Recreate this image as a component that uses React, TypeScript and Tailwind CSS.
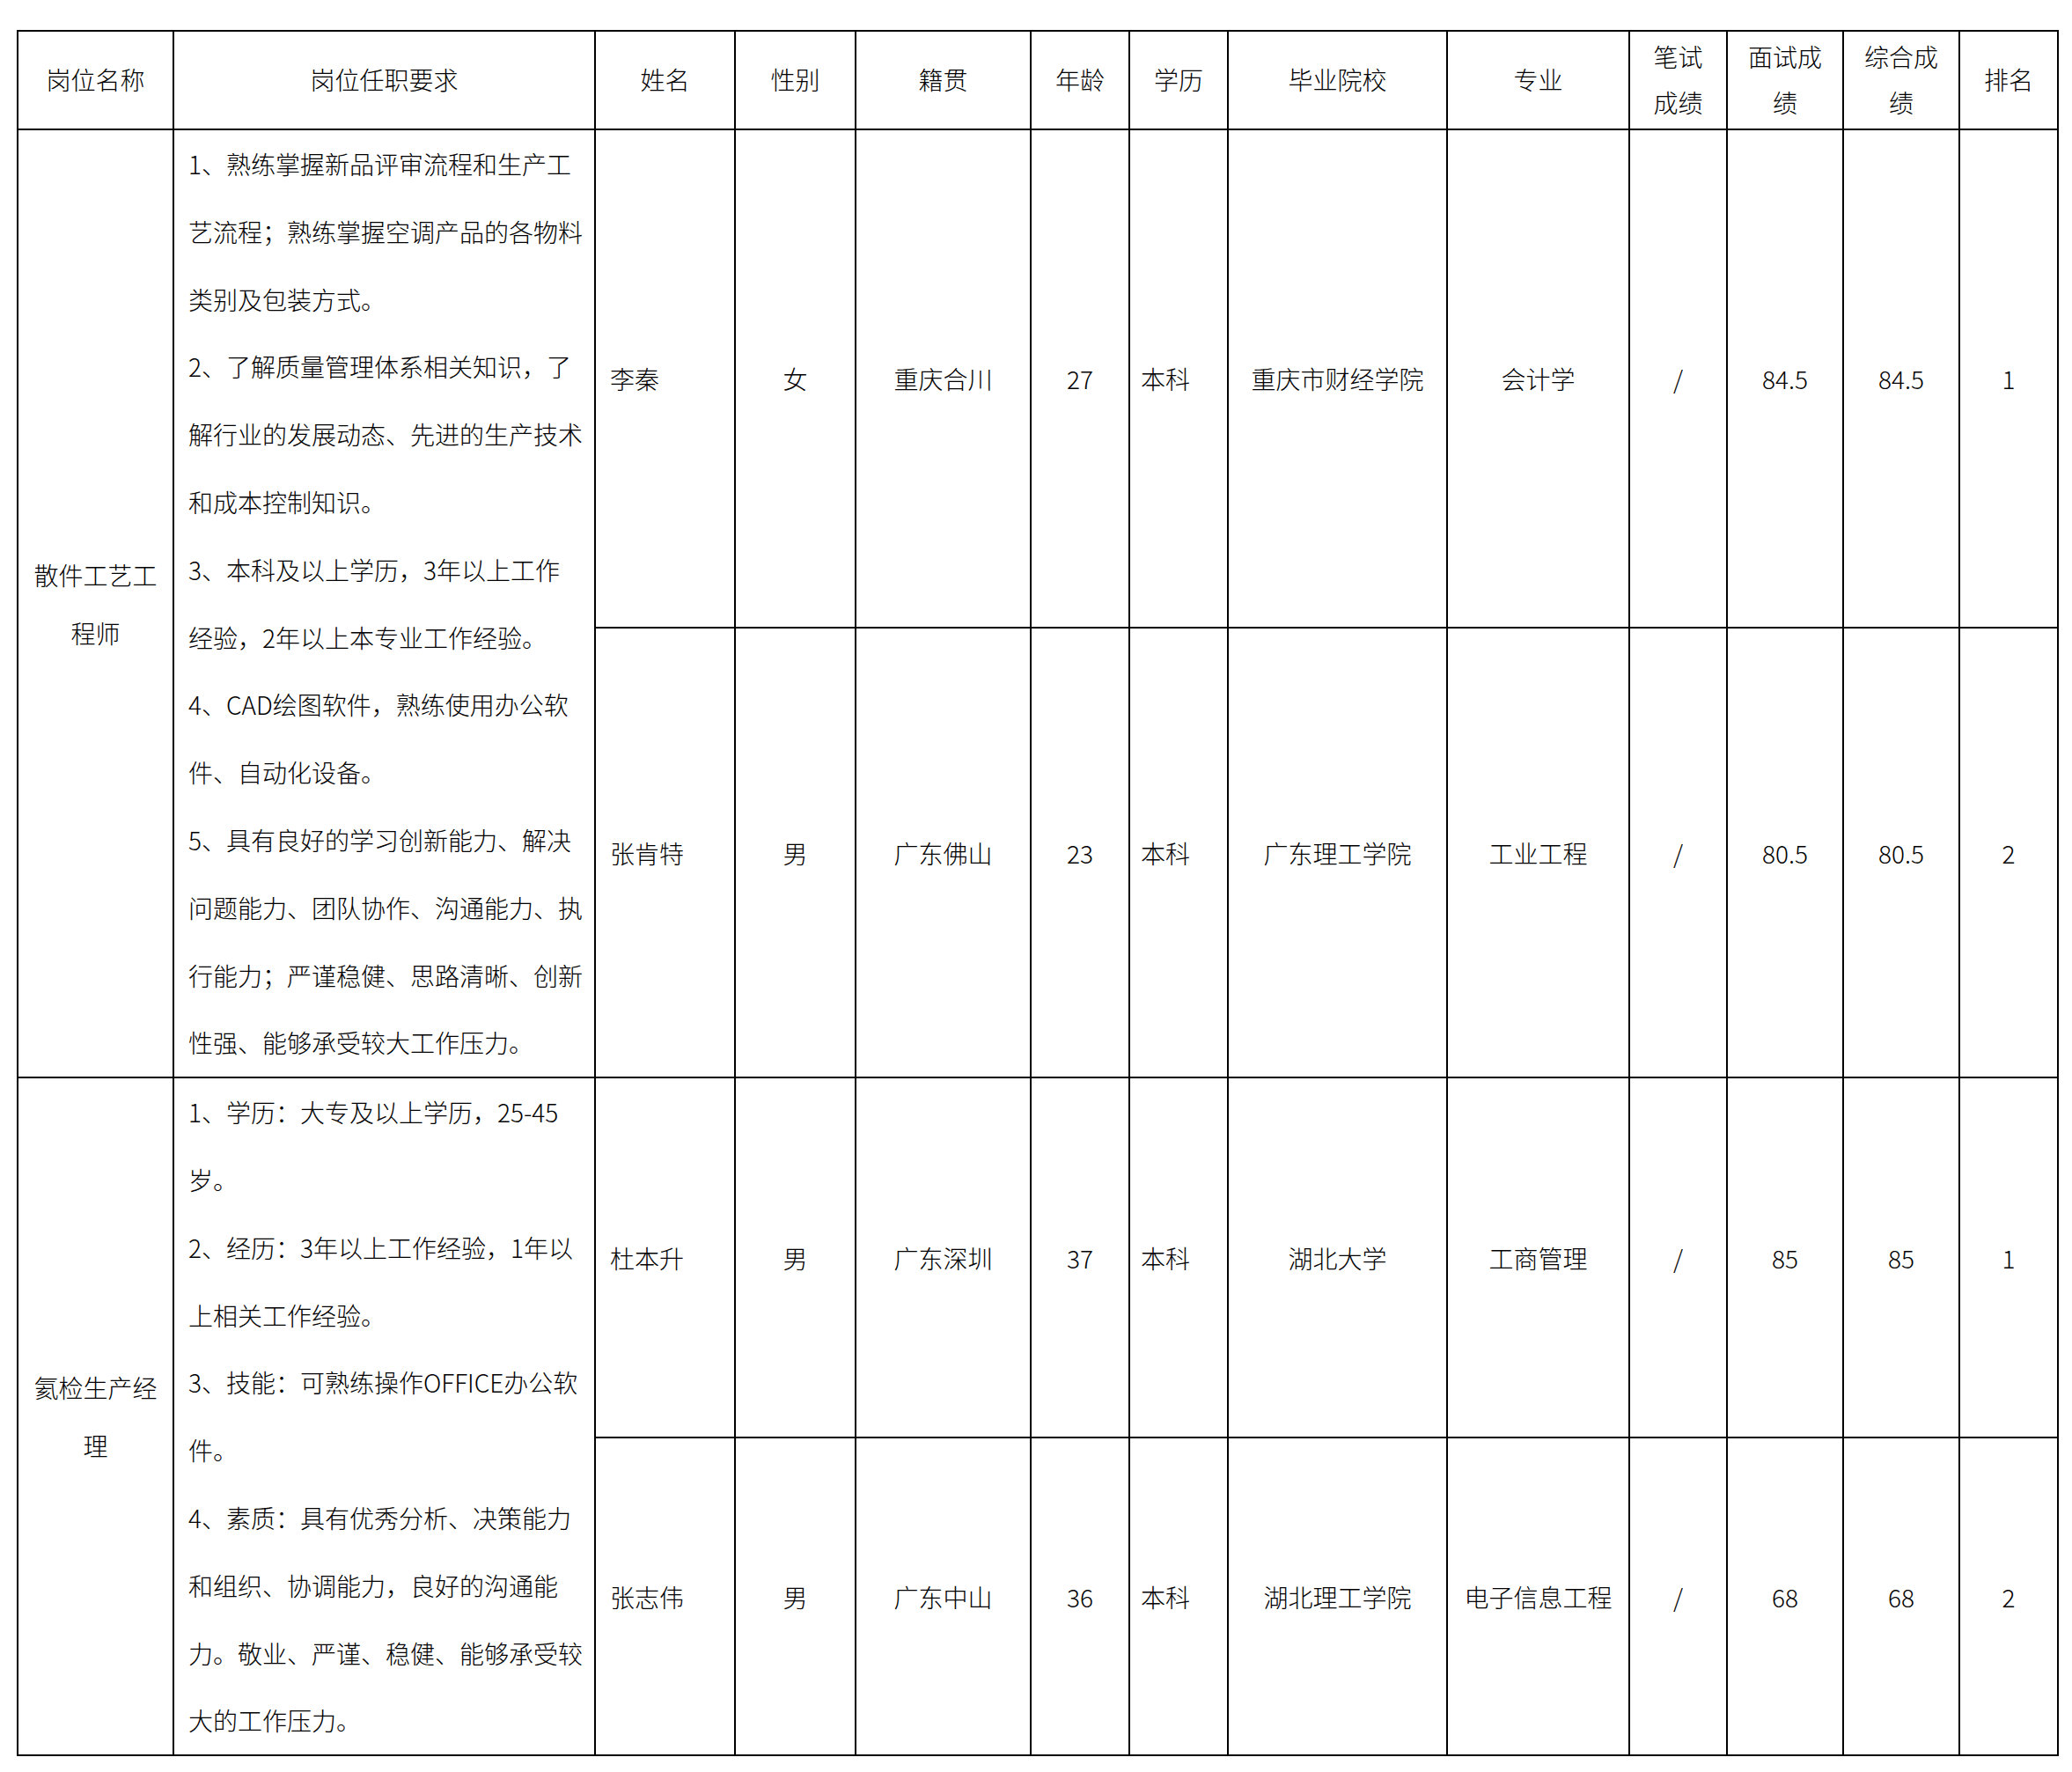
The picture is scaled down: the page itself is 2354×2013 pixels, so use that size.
const cjk = "font-['Noto_Sans_CJK_SC','Noto_Sans',sans-serif]";

const headers: string[][] = [
  ["岗位名称"],
  ["岗位任职要求"],
  ["姓名"],
  ["性别"],
  ["籍贯"],
  ["年龄"],
  ["学历"],
  ["毕业院校"],
  ["专业"],
  ["笔试", "成绩"],
  ["面试成", "绩"],
  ["综合成", "绩"],
  ["排名"],
];

interface Person {
  name: string;
  gender: string;
  hometown: string;
  age: string;
  degree: string;
  school: string;
  major: string;
  written: string;
  interview: string;
  total: string;
  rank: string;
}

interface Section {
  title: string[];
  lines: string[];
  people: Person[];
  heights: string[];
}

const sections: Section[] = [
  {
    title: ["散件工艺工", "程师"],
    lines: [
      "1、熟练掌握新品评审流程和生产工",
      "艺流程；熟练掌握空调产品的各物料",
      "类别及包装方式。",
      "2、了解质量管理体系相关知识，了",
      "解行业的发展动态、先进的生产技术",
      "和成本控制知识。",
      "3、本科及以上学历，3年以上工作",
      "经验，2年以上本专业工作经验。",
      "4、CAD绘图软件，熟练使用办公软",
      "件、自动化设备。",
      "5、具有良好的学习创新能力、解决",
      "问题能力、团队协作、沟通能力、执",
      "行能力；严谨稳健、思路清晰、创新",
      "性强、能够承受较大工作压力。",
    ],
    heights: ["h-[564px]", "h-[509px]"],
    people: [
      { name: "李秦", gender: "女", hometown: "重庆合川", age: "27", degree: "本科", school: "重庆市财经学院", major: "会计学", written: "/", interview: "84.5", total: "84.5", rank: "1" },
      { name: "张肯特", gender: "男", hometown: "广东佛山", age: "23", degree: "本科", school: "广东理工学院", major: "工业工程", written: "/", interview: "80.5", total: "80.5", rank: "2" },
    ],
  },
  {
    title: ["氦检生产经", "理"],
    lines: [
      "1、学历：大专及以上学历，25-45",
      "岁。",
      "2、经历：3年以上工作经验，1年以",
      "上相关工作经验。",
      "3、技能：可熟练操作OFFICE办公软",
      "件。",
      "4、素质：具有优秀分析、决策能力",
      "和组织、协调能力，良好的沟通能",
      "力。敬业、严谨、稳健、能够承受较",
      "大的工作压力。",
    ],
    heights: ["h-[408px]", "h-[360px]"],
    people: [
      { name: "杜本升", gender: "男", hometown: "广东深圳", age: "37", degree: "本科", school: "湖北大学", major: "工商管理", written: "/", interview: "85", total: "85", rank: "1" },
      { name: "张志伟", gender: "男", hometown: "广东中山", age: "36", degree: "本科", school: "湖北理工学院", major: "电子信息工程", written: "/", interview: "68", total: "68", rank: "2" },
    ],
  },
];

const cell = "border-2 border-black align-middle";

const App = () => {
  return (
    <div className={`min-h-screen bg-white pl-[19px] pt-[34px] text-black ${cjk}`}>
      <table className="table-fixed border-collapse w-[2320px] text-[28px] font-light">
        <colgroup>
          <col className="w-[177px]" />
          <col className="w-[479px]" />
          <col className="w-[159px]" />
          <col className="w-[137px]" />
          <col className="w-[199px]" />
          <col className="w-[112px]" />
          <col className="w-[112px]" />
          <col className="w-[249px]" />
          <col className="w-[207px]" />
          <col className="w-[111px]" />
          <col className="w-[132px]" />
          <col className="w-[132px]" />
          <col className="w-[112px]" />
        </colgroup>
        <thead>
          <tr className="h-[112px]">
            {headers.map((h, i) => (
              <th key={i} className={`${cell} text-center font-light leading-[52px] p-0 pb-[3px]`}>
                {h.map((t, j) => (
                  <div key={j}>{t}</div>
                ))}
              </th>
            ))}
          </tr>
        </thead>
        <tbody>
          {sections.map((s, si) =>
            s.people.map((p, pi) => (
              <tr key={`${si}-${pi}`} className={s.heights[pi]}>
                {pi === 0 && (
                  <>
                    <td rowSpan={2} className={`${cell} text-center leading-[66px] p-0`}>
                      {s.title.map((t, j) => (
                        <div key={j}>{t}</div>
                      ))}
                    </td>
                    <td rowSpan={2} className={`${cell} pl-[16px] pr-0 py-0 leading-[76.8px]`}>
                      {s.lines.map((l, j) => (
                        <div key={j} className="whitespace-nowrap">{l}</div>
                      ))}
                    </td>
                  </>
                )}
                <td className={`${cell} pl-[16px]`}>{p.name}</td>
                <td className={`${cell} text-center`}>{p.gender}</td>
                <td className={`${cell} text-center`}>{p.hometown}</td>
                <td className={`${cell} text-center`}>{p.age}</td>
                <td className={`${cell} pl-[12px]`}>{p.degree}</td>
                <td className={`${cell} text-center`}>{p.school}</td>
                <td className={`${cell} text-center`}>{p.major}</td>
                <td className={`${cell} text-center`}>{p.written}</td>
                <td className={`${cell} text-center`}>{p.interview}</td>
                <td className={`${cell} text-center`}>{p.total}</td>
                <td className={`${cell} text-center`}>{p.rank}</td>
              </tr>
            ))
          )}
        </tbody>
      </table>
    </div>
  );
};

export default App;
